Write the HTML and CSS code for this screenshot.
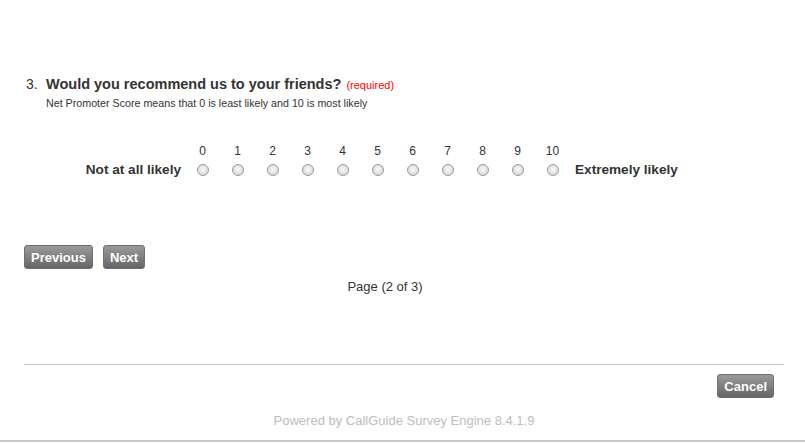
FILE: index.html
```html
<!DOCTYPE html>
<html lang="en">
<head>
    <meta charset="UTF-8">
    <title>Survey</title>
    <link rel="stylesheet" href="styles.css">
</head>
<body>
    <div class="page">
        <div class="question">
            <div class="question-head">
                <span class="number">3.</span>
                <span class="title">Would you recommend us to your friends?</span>
                <span class="required">(required)</span>
            </div>
            <p class="hint">Net Promoter Score means that 0 is least likely and 10 is most likely</p>
        </div>

        <div class="scale">
            <span></span>
            <span class="num">0</span><span class="num">1</span><span class="num">2</span><span class="num">3</span>
            <span class="num">4</span><span class="num">5</span><span class="num">6</span><span class="num">7</span>
            <span class="num">8</span><span class="num">9</span><span class="num">10</span>
            <span></span>

            <span class="end-label low">Not at all likely</span>
            <label class="cell"><input type="radio" name="nps" value="0"></label>
            <label class="cell"><input type="radio" name="nps" value="1"></label>
            <label class="cell"><input type="radio" name="nps" value="2"></label>
            <label class="cell"><input type="radio" name="nps" value="3"></label>
            <label class="cell"><input type="radio" name="nps" value="4"></label>
            <label class="cell"><input type="radio" name="nps" value="5"></label>
            <label class="cell"><input type="radio" name="nps" value="6"></label>
            <label class="cell"><input type="radio" name="nps" value="7"></label>
            <label class="cell"><input type="radio" name="nps" value="8"></label>
            <label class="cell"><input type="radio" name="nps" value="9"></label>
            <label class="cell"><input type="radio" name="nps" value="10"></label>
            <span class="end-label high">Extremely likely</span>
        </div>

        <div class="nav">
            <button class="btn">Previous</button>
            <button class="btn">Next</button>
        </div>

        <p class="page-count">Page (2 of 3)</p>

        <div class="footer">
            <div class="cancel-row">
                <button class="btn">Cancel</button>
            </div>
            <p class="powered">Powered by CallGuide Survey Engine 8.4.1.9</p>
        </div>
    </div>
    <div class="bottom-line"></div>
</body>
</html>
```

FILE: styles.css
```css
body {
    margin: 0;
    font-family: "Liberation Sans", Arial, sans-serif;
    color: #333;
    background-color: #fff;
}
.page {
    padding: 75px 21px 0 24px;
}
.question-head {
    display: flex;
    align-items: baseline;
    line-height: 18px;
}
.number {
    font-size: 14px;
    margin-left: 2px;
    width: 20px;
}
.title {
    font-size: 14.5px;
    font-weight: bold;
}
.required {
    font-size: 11px;
    color: #f00;
    margin-left: 5px;
}
.hint {
    margin: 2px 0 0 22px;
    font-size: 10.7px;
    line-height: 14px;
}
.scale {
    display: grid;
    grid-template-columns: 161px repeat(11, 35px) auto;
    row-gap: 4px;
    margin-top: 34px;
    align-items: center;
}
.num {
    text-align: center;
    font-size: 12px;
    line-height: 14px;
}
.end-label {
    font-size: 13.6px;
    font-weight: bold;
    line-height: 16px;
}
.low {
    text-align: right;
    padding-right: 4px;
}
.high {
    padding-left: 5px;
}
.cell {
    display: flex;
    justify-content: center;
    height: 16px;
    align-items: center;
}
.cell input {
    appearance: none;
    margin: 0;
    width: 12px;
    height: 12px;
    border-radius: 50%;
    border: 1px solid #9a9a9a;
    background: radial-gradient(circle at 50% 45%, #fafafa 0%, #e6e6e6 45%, #cfcfcf 100%);
}
.nav {
    display: flex;
    gap: 10px;
    margin-top: 67px;
}
.btn {
    font-family: "Liberation Sans", Arial, sans-serif;
    font-size: 13px;
    font-weight: bold;
    color: #fff;
    height: 24px;
    padding: 0 6px;
    border: 1px solid #6e6e6e;
    border-radius: 3px;
    background: linear-gradient(#9a9a9a, #666);
    cursor: pointer;
}
.page-count {
    margin: 11px 0 0 0;
    text-align: center;
    font-size: 13px;
    line-height: 14px;
    padding-right: 38px;
}
.footer {
    margin-top: 70px;
    border-top: 1px solid #c8c8c8;
}
.cancel-row {
    display: flex;
    justify-content: flex-end;
    padding: 9px 10px 0 0;
}
.powered {
    margin: 16px 0 0 0;
    text-align: center;
    font-size: 13px;
    line-height: 14px;
    color: #bdbdbd;
}
.bottom-line {
    margin-top: 12px;
    border-top: 2px solid #c8c8c8;
}
```
